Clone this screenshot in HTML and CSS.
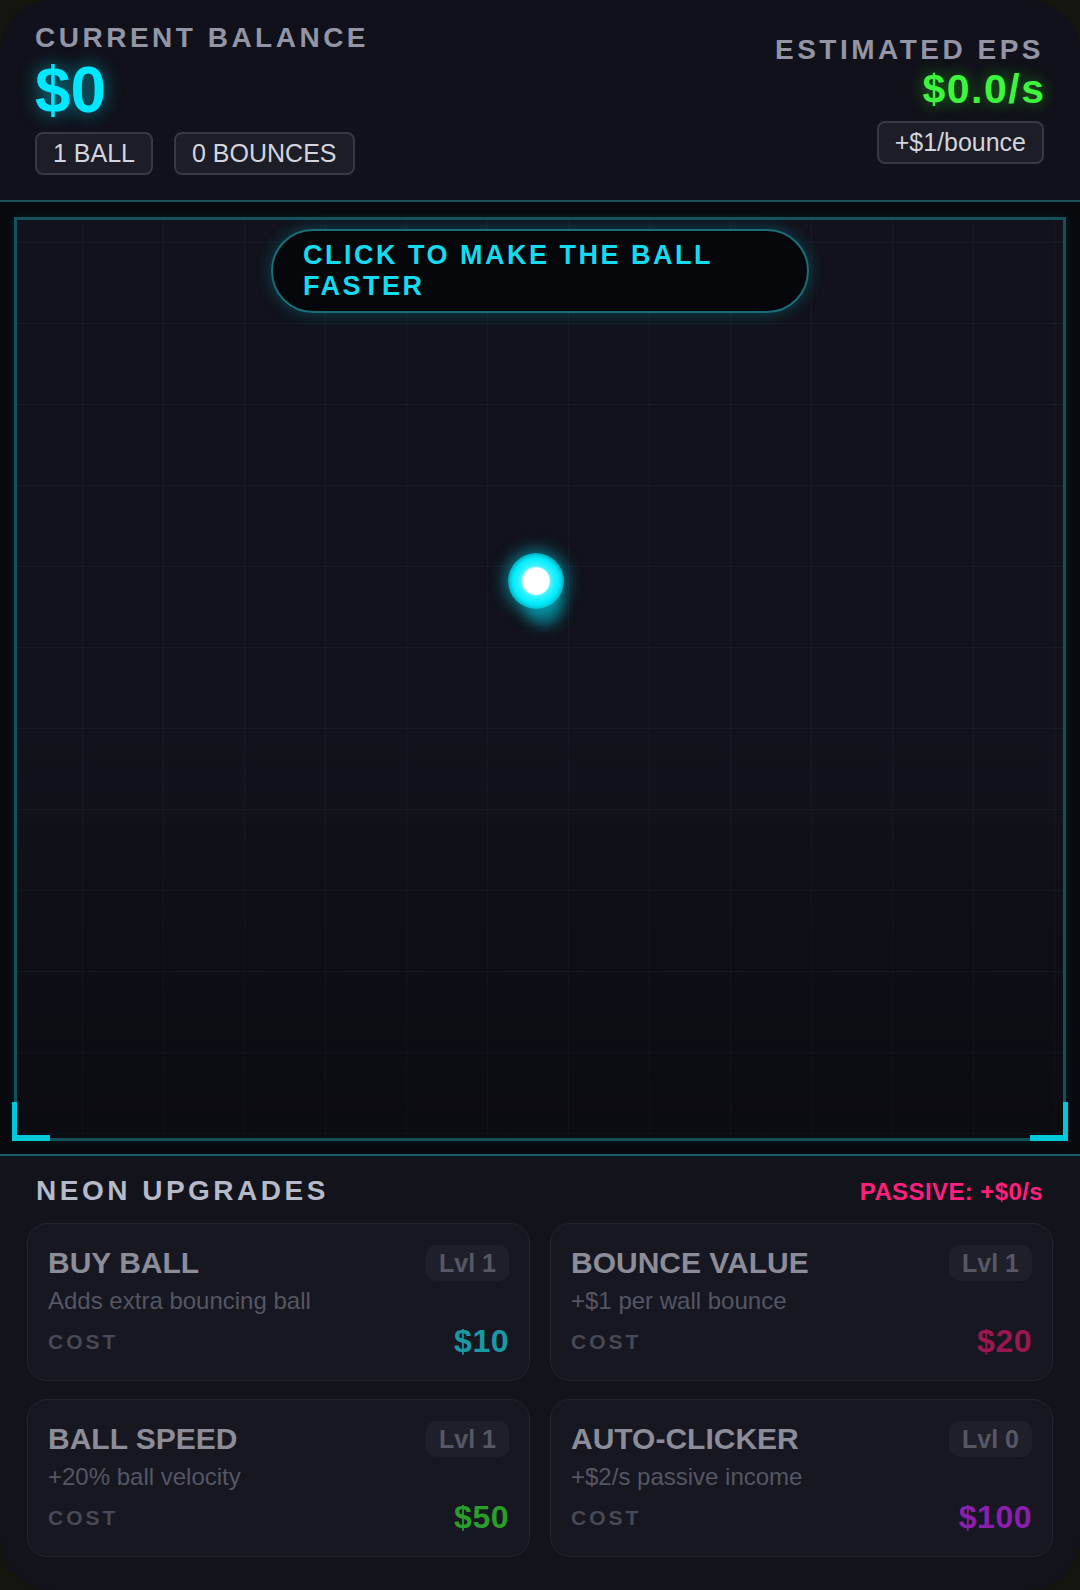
FILE: index.html
```html
<!DOCTYPE html>
<html lang="en">
<head>
    <meta charset="UTF-8">
    <meta name="viewport" content="width=device-width, initial-scale=1.0">
    <title>Neon Bounce</title>
    <link rel="stylesheet" href="styles.css">
</head>
<body>
    <div class="app">
        <!-- Topo: saldo e ganhos -->
        <header class="topbar">
            <div class="balance">
                <div class="label">CURRENT BALANCE</div>
                <div class="money">$0</div>
                <div class="chips">
                    <span class="chip">1 BALL</span>
                    <span class="chip">0 BOUNCES</span>
                </div>
            </div>
            <div class="eps">
                <div class="label">ESTIMATED EPS</div>
                <div class="eps-value">$0.0/s</div>
                <span class="chip">+$1/bounce</span>
            </div>
        </header>

        <!-- Area do jogo -->
        <section class="arena">
            <div class="field">
                <div class="hint">CLICK TO MAKE THE BALL FASTER</div>
                <div class="trail"></div>
                <div class="ball"></div>
                <span class="corner left"></span>
                <span class="corner right"></span>
            </div>
        </section>

        <!-- Loja -->
        <section class="shop">
            <div class="shop-head">
                <h2>NEON UPGRADES</h2>
                <span class="passive">PASSIVE: +$0/s</span>
            </div>
            <div class="cards">
                <div class="card">
                    <div class="card-top">
                        <h3>BUY BALL</h3>
                        <span class="lvl">Lvl 1</span>
                    </div>
                    <div class="desc">Adds extra bouncing ball</div>
                    <div class="cost-row">
                        <span class="cost-label">COST</span>
                        <span class="price cyan">$10</span>
                    </div>
                </div>
                <div class="card">
                    <div class="card-top">
                        <h3>BOUNCE VALUE</h3>
                        <span class="lvl">Lvl 1</span>
                    </div>
                    <div class="desc">+$1 per wall bounce</div>
                    <div class="cost-row">
                        <span class="cost-label">COST</span>
                        <span class="price pink">$20</span>
                    </div>
                </div>
                <div class="card">
                    <div class="card-top">
                        <h3>BALL SPEED</h3>
                        <span class="lvl">Lvl 1</span>
                    </div>
                    <div class="desc">+20% ball velocity</div>
                    <div class="cost-row">
                        <span class="cost-label">COST</span>
                        <span class="price green">$50</span>
                    </div>
                </div>
                <div class="card">
                    <div class="card-top">
                        <h3>AUTO-CLICKER</h3>
                        <span class="lvl">Lvl 0</span>
                    </div>
                    <div class="desc">+$2/s passive income</div>
                    <div class="cost-row">
                        <span class="cost-label">COST</span>
                        <span class="price purple">$100</span>
                    </div>
                </div>
            </div>
        </section>
    </div>
</body>
</html>
```

FILE: styles.css
```css
/* Estilos gerais */
body {
    margin: 0;
    background-color: #15150f;
    font-family: "Liberation Sans", Arial, sans-serif;
    color: #fff;
}

.app {
    height: 1590px;
    border-radius: 54px;
    overflow: hidden;
    background-color: #12131b;
    display: flex;
    flex-direction: column;
}

/* Topo */
.topbar {
    display: flex;
    justify-content: space-between;
    align-items: center;
    padding: 22px 36px 25px 35px;
    background-color: #10111a;
    border-bottom: 2px solid #1a4f5a;
}

.label {
    font-size: 28px;
    line-height: 32px;
    font-weight: bold;
    letter-spacing: 3.5px;
    color: #9395a5;
}

.money {
    font-size: 64px;
    line-height: 72px;
    font-weight: bold;
    color: #00e8ff;
    text-shadow: 0 0 18px rgba(0, 229, 255, 0.55);
}

.chips {
    display: flex;
    gap: 21px;
    margin-top: 6px;
}

.chip {
    display: inline-block;
    padding: 5px 16px;
    font-size: 25px;
    color: #d3d5de;
    background-color: #1c1d26;
    border: 2px solid #363845;
    border-radius: 8px;
}

.eps {
    display: flex;
    flex-direction: column;
    align-items: flex-end;
}

.eps-value {
    font-size: 41px;
    line-height: 46px;
    font-weight: bold;
    letter-spacing: 1.5px;
    margin-right: -1.5px;
    color: #3df53d;
    text-shadow: 0 0 16px rgba(57, 255, 20, 0.45);
    margin-bottom: 9px;
}

/* Area do jogo */
.arena {
    padding: 15px 14px 13px;
    background-color: #08090d;
    border-bottom: 2px solid #1a5a62;
}

.field {
    position: relative;
    box-sizing: border-box;
    height: 924px;
    border: 3px solid #14525b;
    background-color: #11121b;
    background-image:
        linear-gradient(180deg, rgba(0, 0, 0, 0) 55%, rgba(0, 0, 0, 0.35) 100%),
        linear-gradient(90deg, rgba(45, 70, 90, 0.16) 1px, transparent 1px),
        linear-gradient(180deg, rgba(45, 70, 90, 0.16) 1px, transparent 1px);
    background-size: 100% 100%, 81px 81px, 81px 81px;
    background-position: 0 0, 65px 0, 0 22px;
    box-shadow: 0 0 10px rgba(0, 200, 220, 0.12);
    display: flex;
    flex-direction: column;
    align-items: center;
    padding-top: 9px;
}

.hint {
    width: 538px;
    box-sizing: border-box;
    padding: 9px 30px;
    border: 2px solid #1a6d77;
    border-radius: 50px;
    background-color: #06070a;
    box-shadow: 0 0 16px rgba(0, 200, 225, 0.3);
    font-size: 27px;
    line-height: 31px;
    font-weight: bold;
    letter-spacing: 2.5px;
    color: #14dbef;
}

/* Bola */
.ball {
    position: absolute;
    left: 491px;
    top: 333px;
    width: 56px;
    height: 56px;
    border-radius: 50%;
    background: radial-gradient(circle, #fff 0 13px, #3ff4ff 15px, #00ecff 23px, rgba(0, 236, 255, 0.7) 28px);
    box-shadow: 0 0 16px 3px rgba(0, 229, 255, 0.5);
}

.trail {
    position: absolute;
    left: 508px;
    top: 366px;
    width: 38px;
    height: 40px;
    border-radius: 50%;
    background-color: rgba(0, 220, 240, 0.45);
    filter: blur(7px);
}

/* Cantos */
.corner {
    position: absolute;
    bottom: -3px;
    width: 33px;
    height: 33px;
    border-bottom: 6px solid #00c9da;
}

.corner.left {
    left: -5px;
    border-left: 5px solid #00c9da;
}

.corner.right {
    right: -5px;
    border-right: 5px solid #00c9da;
}

/* Loja */
.shop {
    flex-grow: 1;
    padding: 19px 27px 0;
    background-color: #12131b;
}

.shop-head {
    display: flex;
    justify-content: space-between;
    align-items: baseline;
    padding: 0 10px 0 9px;
    margin-bottom: 16px;
}

.shop-head h2 {
    margin: 0;
    font-size: 28px;
    line-height: 32px;
    letter-spacing: 3.5px;
    color: #b6b9c7;
}

.passive {
    font-size: 24px;
    font-weight: bold;
    letter-spacing: 0.4px;
    color: #ff1f7d;
}

.cards {
    display: grid;
    grid-template-columns: 1fr 1fr;
    gap: 18px 20px;
}

.card {
    padding: 21px 20px 20px;
    background-color: #161720;
    border: 1.5px solid #23242e;
    border-radius: 20px;
}

.card-top {
    display: flex;
    justify-content: space-between;
    align-items: center;
}

.card h3 {
    margin: 0;
    font-size: 30px;
    color: #8c8d99;
}

.lvl {
    padding: 3.5px 13px;
    font-size: 25px;
    font-weight: bold;
    color: #555765;
    background-color: #1e1f29;
    border-radius: 10px;
}

.desc {
    margin-top: 6px;
    font-size: 24px;
    color: #545664;
}

.cost-row {
    display: flex;
    justify-content: space-between;
    align-items: center;
    margin-top: 8px;
}

.cost-label {
    font-size: 21px;
    font-weight: bold;
    letter-spacing: 3px;
    color: #474957;
}

.price {
    font-size: 32px;
    font-weight: bold;
    letter-spacing: 0.5px;
}

.price.cyan { color: #1a98a3; }
.price.pink { color: #9c1650; }
.price.green { color: #2b9d2b; }
.price.purple { color: #8a1fae; }
```
